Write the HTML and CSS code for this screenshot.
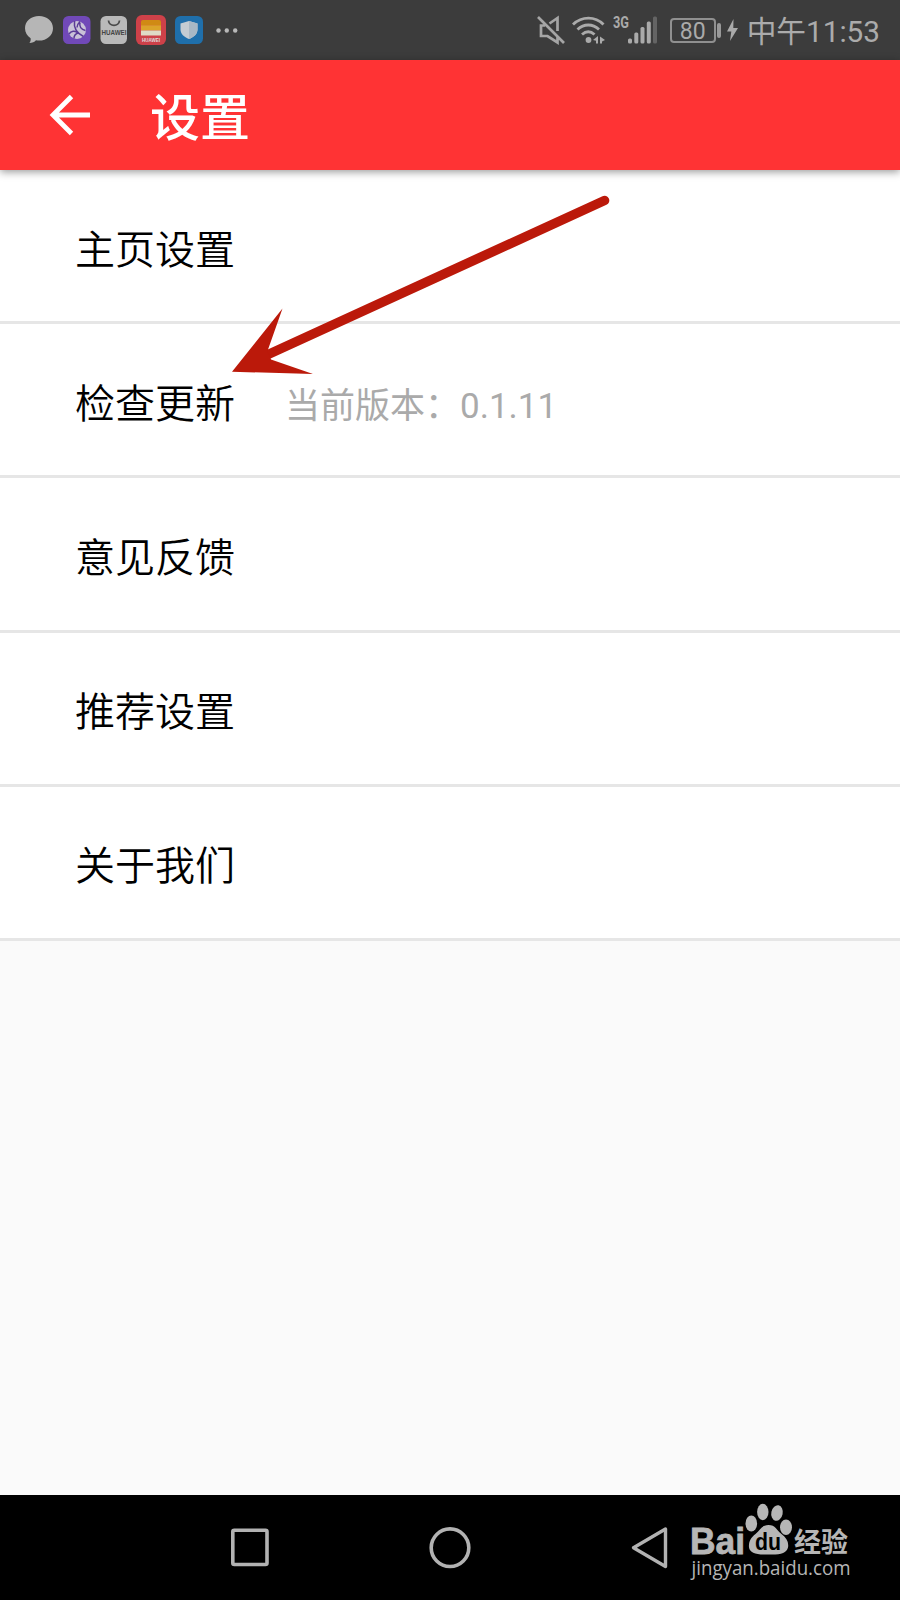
FILE: index.html
```html
<!DOCTYPE html>
<html lang="zh-CN">
<head>
    <meta charset="UTF-8">
    <meta name="viewport" content="width=device-width, initial-scale=1.0">
    <title>设置</title>
    <link rel="stylesheet" href="styles.css">
</head>
<body>
    <div class="status-bar">
        <div class="status-left">
            <!-- 短信 -->
            <svg width="28" height="28" viewBox="0 0 28 28">
                <path d="M14 0C6 0 0 5.2 0 12.2c0 4.300 2.200 7.700 5.600 10.100.3 2-.2 3.500-1.200 4.700 3 0 5-1 6.600-2.700 1 .2 2 .3 3 .3 8 0 14-5.300 14-12.400S22 0 14 0z" fill="#b6b6b6"/>
            </svg>
            <!-- 浏览器 -->
            <svg width="28" height="28" viewBox="0 0 28 28">
                <rect width="27.500" height="28" rx="5.500" fill="#7149b8"/>
                <circle cx="14" cy="14" r="9" fill="#c9c2d8"/>
                <path d="M11.500 5c-1 7 2 12 9 15.500M17 6.500c-1 4 1 7 5.500 8M6 18c2-3 6-4 9-1M15 17c-3 1-4 3-4 5.500M17 5.500c-2 2-3 4-3 6" fill="none" stroke="#5a3a96" stroke-width="1.500"/>
            </svg>
            <!-- 应用市场 -->
            <svg width="28" height="28" viewBox="0 0 28 28">
                <rect x=".5" width="26.500" height="28" rx="5.500" fill="#b9b9b9"/>
                <path d="M8.500 4.500c.5 6.500 10.500 6.500 11 0" fill="none" stroke="#4a4a4a" stroke-width="1.800"/>
                <text class="app-text" x="14" y="18.500" textLength="25" lengthAdjust="spacingAndGlyphs">HUAWEI</text>
            </svg>
            <!-- 钱包 -->
            <svg class="wallet" width="30" height="30" viewBox="0 0 30 30">
                <rect width="30" height="30" rx="6" fill="#ce4149"/>
                <path d="M5 7a2 2 0 0 1 2-2h16a2 2 0 0 1 2 2v3.500H5z" fill="#d08a14"/>
                <path d="M5 10.300h20v5.200H5z" fill="#dba42a"/>
                <path d="M5 15.500h20v5H5z" fill="#dfdac6"/>
                <text class="app-text wallet-text" x="15" y="26.800" textLength="18" lengthAdjust="spacingAndGlyphs">HUAWEI</text>
            </svg>
            <!-- 手机管家 -->
            <svg width="28" height="28" viewBox="0 0 28 28">
                <rect width="28" height="28" rx="5.500" fill="#1f6fab"/>
                <path d="M14 5l8.500 2.500v6c0 4.500-3.500 7.500-8.500 9.500-5-2-8.500-5-8.500-9.500v-6z" fill="#c4ccd3"/>
                <path d="M14 5l8.500 2.500v6c0 4.500-3.500 7.500-8.500 9.500z" fill="#a9b8c5"/>
            </svg>
            <svg class="more" width="22" height="5" viewBox="0 0 22 5">
                <g fill="#b8b8b8">
                    <circle cx="2.500" cy="2.500" r="2.200"/>
                    <circle cx="10.800" cy="2.500" r="2.200"/>
                    <circle cx="19.200" cy="2.500" r="2.200"/>
                </g>
            </svg>
        </div>
        <div class="status-right">
            <!-- 静音 -->
            <svg width="28" height="28" viewBox="0 0 28 28">
                <path d="M1 1l26 26M12.500 7.500L20.500 2v13M20.500 20.500v6L10.500 20H4V9.500h4" fill="none" stroke="#a5a5a5" stroke-width="2.700"/>
            </svg>
            <!-- 无线网络 -->
            <svg class="wifi" width="33" height="28" viewBox="0 0 33 28">
                <path d="M1 8.500c9-8.500 22-8.500 30.500 0M5.500 13.500c6.500-6 15-6 21.500 0M10 18.500c4-3.600 8.500-3.600 12.500 0" fill="none" stroke="#aaa" stroke-width="2.900"/>
                <circle cx="16.500" cy="24" r="2.900" fill="#aaa"/>
                <path d="M21 24l5-4v7.500h-2V24.800zM28 20.500l5 3.500-3 1.500v2h-2z" fill="#aaa"/>
            </svg>
            <!-- 移动信号 -->
            <svg class="signal" width="46" height="28" viewBox="0 0 46 28">
                <text class="net-text" x="0" y="12" textLength="16" lengthAdjust="spacingAndGlyphs">3G</text>
                <g fill="#aaa">
                    <rect x="15" y="22.500" width="4" height="5" rx="1.500"/>
                    <rect x="21.300" y="16.500" width="4" height="11" rx="1.500"/>
                    <rect x="27.500" y="11" width="4" height="16.500" rx="1.500"/>
                    <rect x="33.800" y="5.500" width="4" height="22" rx="1.500"/>
                    <rect x="40" y=".5" width="4" height="27" rx="1.500" fill="#646464"/>
                </g>
            </svg>
            <!-- 电量 -->
            <div class="battery">80</div>
            <span class="battery-cap"></span>
            <svg class="bolt" width="11" height="22" viewBox="0 0 11 22">
                <path d="M6.500 0L0 12.500h4.300L3 22l8-13H6.300z" fill="#aaa"/>
            </svg>
            <span class="time">中午11:53</span>
        </div>
    </div>

    <div class="header">
        <svg class="back" width="40" height="40" viewBox="0 0 40 40">
            <path d="M40 20H3M21.500 1.500L3 20l18.500 18.500" fill="none" stroke="#fff" stroke-width="4.800"/>
        </svg>
        <span class="title">设置</span>
    </div>

    <div class="list">
        <div class="item">主页设置</div>
        <div class="item">检查更新<span class="version">当前版本：0.1.11</span></div>
        <div class="item">意见反馈</div>
        <div class="item">推荐设置</div>
        <div class="item">关于我们</div>
    </div>

    <div class="nav-bar">
        <svg width="42" height="42" viewBox="0 0 42 42">
            <rect x="3.800" y="3.300" width="34.200" height="34.200" rx="1.500" fill="none" stroke="#b2b2b2" stroke-width="3.600"/>
        </svg>
        <svg width="42" height="42" viewBox="0 0 42 42">
            <circle cx="21" cy="20.700" r="18.800" fill="none" stroke="#b2b2b2" stroke-width="3.600"/>
        </svg>
        <svg width="42" height="42" viewBox="0 0 42 42">
            <path d="M36.500 2v37.500L4.500 20.700z" fill="none" stroke="#b2b2b2" stroke-width="3.400" stroke-linejoin="round"/>
        </svg>
    </div>

    <!-- 指向检查更新的箭头 -->
    <svg class="arrow" width="380" height="184" viewBox="0 0 380 184">
        <path d="M374.500 7.500L37 162" fill="none" stroke="#bb190a" stroke-width="9.600" stroke-linecap="round"/>
        <path d="M2 178.700L52.500 115.500 37.500 158 41 166.500 83 181z" fill="#bb190a"/>
    </svg>

    <!-- 水印 -->
    <svg class="watermark" width="180" height="90" viewBox="0 0 180 90">
        <g fill="#b6b6b6">
            <text class="wm-bai" x="2" y="54.500" textLength="55" lengthAdjust="spacingAndGlyphs">Bai</text>
            <ellipse cx="63.300" cy="24.500" rx="5.800" ry="8"/>
            <ellipse cx="74.800" cy="13" rx="5.700" ry="8.300"/>
            <ellipse cx="89" cy="14" rx="5.700" ry="7.800" transform="rotate(12 89 14)"/>
            <ellipse cx="98" cy="28.300" rx="6" ry="7.800"/>
            <path d="M80.500 26c-7 0-8 5-13 9-5 4-7 8-6.500 13.500C62 54 68 56 80.500 55.500c12 .5 18-1.500 19.500-7C101 43 98.500 39 93.500 35c-5-4-6-9-13-9z"/>
            <text class="wm-jy" x="106" y="53" textLength="54" lengthAdjust="spacingAndGlyphs">经验</text>
            <text class="wm-url" x="3.500" y="76" textLength="159" lengthAdjust="spacingAndGlyphs">jingyan.baidu.com</text>
        </g>
        <text class="wm-du" x="67" y="51" textLength="26" lengthAdjust="spacingAndGlyphs">du</text>
    </svg>
</body>
</html>
```
FILE: styles.css
```css
* {
    box-sizing: border-box;
}
body {
    position: relative;
    display: flex;
    flex-direction: column;
    width: 900px;
    height: 1600px;
    margin: 0;
    background: #fafafa;
    font-family: Roboto, "Noto Sans CJK SC", sans-serif;
    overflow: hidden;
}
svg {
    display: block;
    flex: none;
    overflow: visible;
}
.status-bar {
    display: flex;
    justify-content: space-between;
    height: 60px;
    padding: 0 20px 0 25px;
    background: #3c3c3c;
}
.status-left,
.status-right {
    display: flex;
    align-items: center;
}
.status-left {
    gap: 9.500px;
}
.wallet {
    margin: 0 0 0 -2px;
}
.more {
    margin-left: 3px;
}
.app-text {
    font: bold 7px "Liberation Sans", sans-serif;
    fill: #444;
    text-anchor: middle;
}
.wallet-text {
    font-size: 5px;
    fill: #ddd;
}
.wifi {
    margin-left: 7px;
}
.signal {
    margin-left: 8px;
}
.net-text {
    font: bold 16px Roboto, sans-serif;
    fill: #aaa;
}
.battery {
    width: 46px;
    height: 25px;
    margin-left: 11px;
    border: 2px solid #909090;
    border-radius: 4px;
    color: #aaa;
    font-size: 23px;
    line-height: 23px;
    text-align: center;
}
.battery-cap {
    width: 4px;
    height: 15px;
    margin-left: 1px;
    border-radius: 2px;
    background: #999;
}
.bolt {
    margin-left: 6px;
}
.time {
    margin-left: 9px;
    padding-top: 3px;
    color: #ababab;
    font-size: 29.700px;
    line-height: 57px;
    white-space: nowrap;
}
.header {
    z-index: 1;
    display: flex;
    align-items: center;
    height: 110px;
    padding-left: 50px;
    background: #ff3334;
    box-shadow: 0 2px 8px rgba(0, 0, 0, .4);
}
.title {
    margin-left: 60px;
    padding-top: 8px;
    color: #fff;
    font-size: 50px;
    font-weight: 500;
    line-height: 102px;
}
.item {
    display: flex;
    align-items: center;
    height: 154.200px;
    padding: 2px 0 0 75px;
    border-bottom: 3px solid #e6e6e6;
    background: #fff;
    color: #000;
    font-size: 40px;
    font-weight: 350;
}
.version {
    margin-left: 50px;
    padding-top: 3px;
    color: #aaa;
    font-size: 35px;
    font-weight: 400;
}
.nav-bar {
    display: flex;
    justify-content: center;
    align-items: center;
    gap: 158px;
    height: 105px;
    margin-top: auto;
    background: #000;
}
.arrow {
    position: absolute;
    z-index: 2;
    left: 230px;
    top: 193px;
}
.watermark {
    position: absolute;
    left: 688px;
    top: 1499px;
}
.wm-bai {
    font: bold 36px "Liberation Sans", sans-serif;
    stroke: #b6b6b6;
    stroke-width: .8px;
}
.wm-du {
    font: bold 24px "Liberation Sans", sans-serif;
    fill: #000;
}
.wm-jy {
    font: bold 27px "Noto Sans CJK SC", sans-serif;
}
.wm-url {
    font: 20px "Open Sans", sans-serif;
}
```
